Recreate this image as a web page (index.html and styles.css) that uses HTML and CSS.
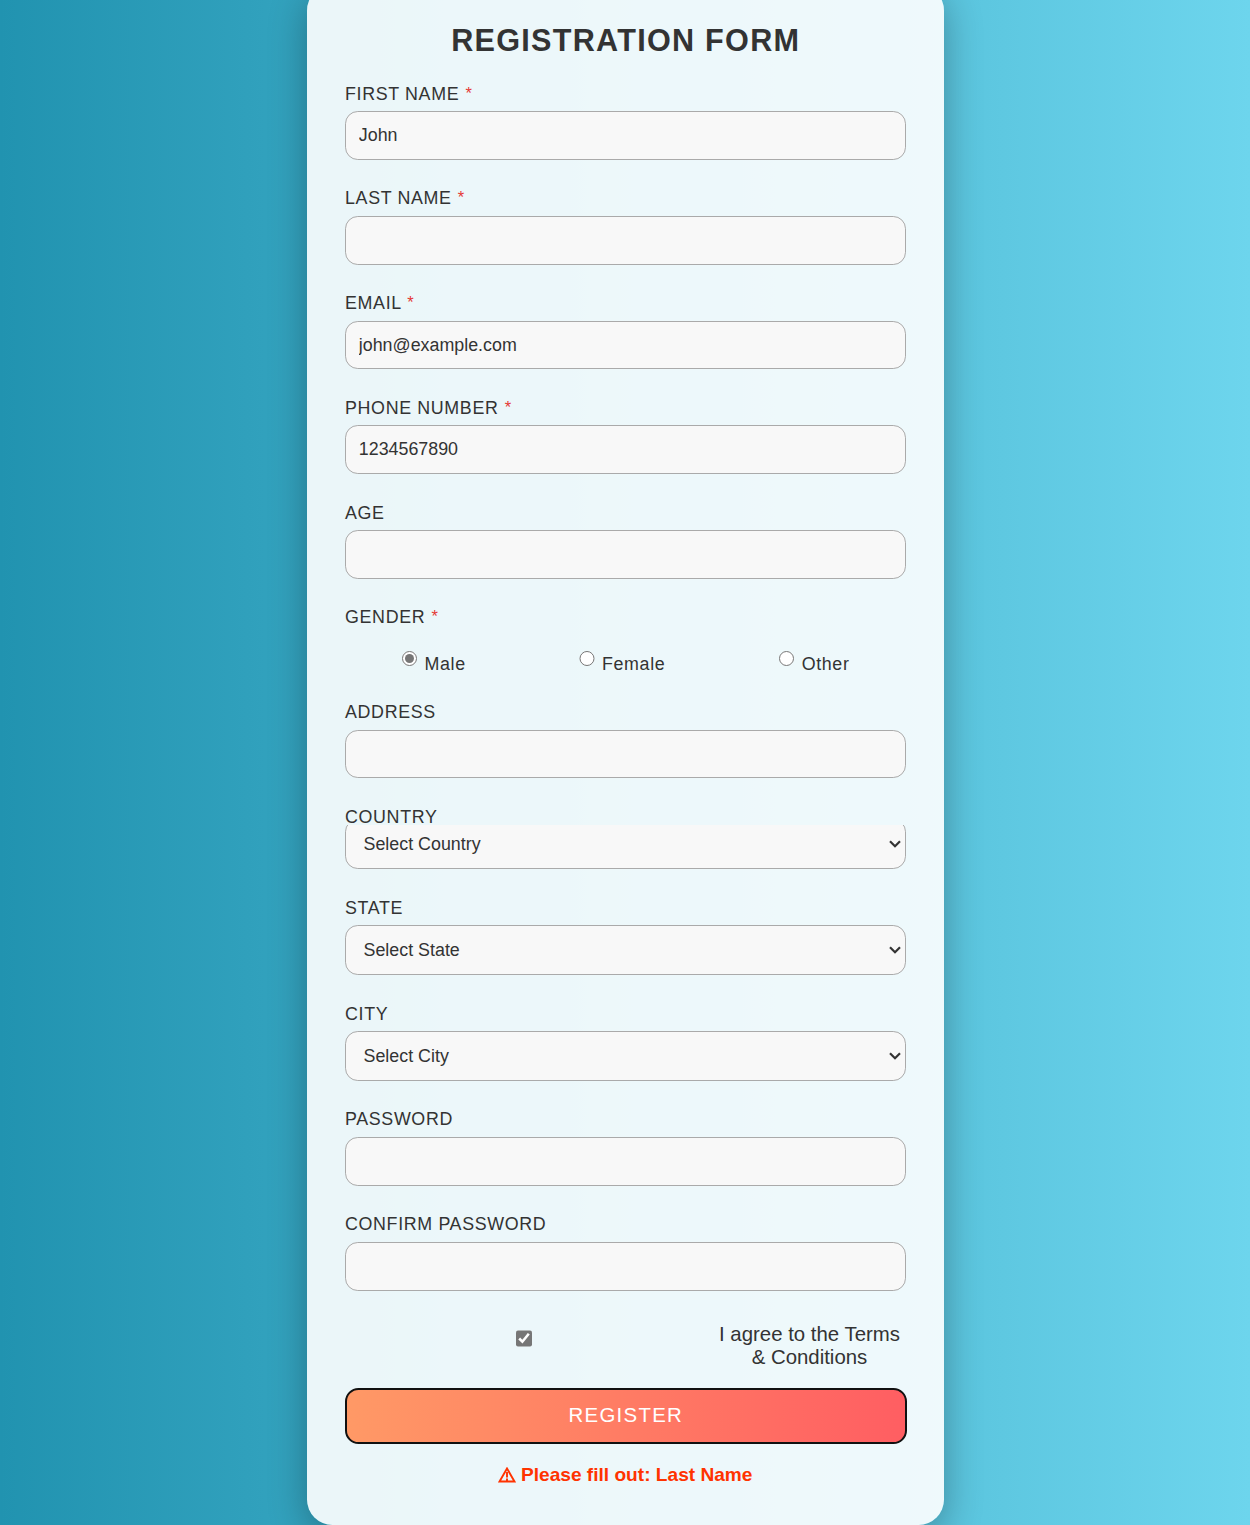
FILE: index.html
```html
<!DOCTYPE html>
<html lang="en">
<head>
<meta charset="utf-8">
<title>Registration Form</title>
<link rel="stylesheet" href="styles.css">
</head>
<body>
<form class="card">
  <h1 class="title">REGISTRATION FORM</h1>
  <div class="field"><label class="label" for="first">FIRST NAME <span class="required">*</span></label><input class="control" id="first" type="text" value="John"></div>
  <div class="field"><label class="label" for="last">LAST NAME <span class="required">*</span></label><input class="control" id="last" type="text"></div>
  <div class="field"><label class="label" for="email">EMAIL <span class="required">*</span></label><input class="control" id="email" type="email" value="john@example.com"></div>
  <div class="field"><label class="label" for="phone">PHONE NUMBER <span class="required">*</span></label><input class="control" id="phone" type="tel" value="1234567890"></div>
  <div class="field"><label class="label" for="age">AGE</label><input class="control" id="age" type="text"></div>
  <div class="field field-gender">
    <span class="label">GENDER <span class="required">*</span></span>
    <div class="radios">
      <label class="radio"><input type="radio" name="gender" checked>Male</label>
      <label class="radio"><input type="radio" name="gender">Female</label>
      <label class="radio"><input type="radio" name="gender">Other</label>
    </div>
  </div>
  <div class="field"><label class="label" for="address">ADDRESS</label><input class="control" id="address" type="text"></div>
  <div class="field field-country">
    <label class="label" for="country">COUNTRY</label>
    <div class="select-box">
      <select class="control" id="country"><option>Select Country</option></select>
      <svg class="chevron" viewBox="0 0 12 8"><path d="M1 1.2 6 6.2 11 1.2"/></svg>
    </div>
  </div>
  <div class="field field-select">
    <label class="label" for="state">STATE</label>
    <div class="select-box">
      <select class="control" id="state"><option>Select State</option></select>
      <svg class="chevron" viewBox="0 0 12 8"><path d="M1 1.2 6 6.2 11 1.2"/></svg>
    </div>
  </div>
  <div class="field field-select">
    <label class="label" for="city">CITY</label>
    <div class="select-box">
      <select class="control" id="city"><option>Select City</option></select>
      <svg class="chevron" viewBox="0 0 12 8"><path d="M1 1.2 6 6.2 11 1.2"/></svg>
    </div>
  </div>
  <div class="field"><label class="label" for="password">PASSWORD</label><input class="control" id="password" type="password"></div>
  <div class="field"><label class="label" for="confirm">CONFIRM PASSWORD</label><input class="control" id="confirm" type="password"></div>
  <div class="terms">
    <input class="check" id="terms" type="checkbox" checked>
    <label for="terms">I agree to the Terms<br>&amp; Conditions</label>
  </div>
  <button class="submit" type="button">REGISTER</button>
  <p class="message"><svg class="warning" viewBox="0 0 18 16"><path d="M9 1.5 16.5 14.5H1.5Z"/><path d="M9 5V10.6M9 11.6V14"/></svg><span>Please fill out: Last Name</span></p>
</form>
</body>
</html>
```
FILE: styles.css
```css
* { box-sizing: border-box; }

body {
  margin: 0;
  height: 1525px;
  overflow: hidden;
  font-family: Arial, "Liberation Sans", sans-serif;
  color: #333;
  background: linear-gradient(to right, #2193b0, #6dd5ed);
}

.card {
  width: 637.5px;
  height: 1540px;
  margin: -15px 0 0 306.8px;
  padding: 35px 37.9px 0 38.25px;
  border-radius: 25.5px;
  background: rgba(255, 255, 255, 0.9);
  box-shadow: 0 10px 38px rgba(0, 0, 0, 0.3);
}

.title {
  margin: 0 0 22.6px;
  height: 40px;
  line-height: 40px;
  font-size: 30.6px;
  letter-spacing: 1.275px;
  text-align: center;
}

.field { height: 104.78px; }
.field-gender { height: 94.5px; }
.field-country { height: 91px; }
.field-select { height: 105.9px; }

.label {
  display: block;
  height: 28.6px;
  line-height: 22px;
  font-size: 17.85px;
  letter-spacing: 0.64px;
}

.required {
  margin-left: 0.6px;
  font-size: 16.5px;
  line-height: 1;
  color: #e53935;
  vertical-align: 1px;
}

.control {
  display: block;
  width: 100%;
  height: 48.7px;
  margin: 0;
  padding: 0 12.75px;
  border: 1.275px solid #aaa;
  border-radius: 12.75px;
  font: 17.85px Arial, "Liberation Sans", sans-serif;
  color: #333;
  background: #f8f8f8;
  appearance: none;
}

.radios {
  display: flex;
  justify-content: space-around;
  padding-top: 9.5px;
}

.radio {
  display: flex;
  font-size: 17.85px;
  letter-spacing: 0.64px;
  line-height: 38px;
}

.radio input {
  width: 15.5px;
  height: 15.5px;
  margin: 6px 7.3px 0 -0.3px;
  accent-color: #767676;
}

.select-box {
  display: grid;
  align-items: center;
}

.select-box > * { grid-area: 1 / 1; }
.select-box .control { height: 49.8px; padding-left: 17.5px; }

/* The country list is shorter than its control, so its top edge is cut. */
.field-country .label { height: 19.2px; }
.field-country .select-box {
  height: 44.2px;
  overflow: hidden;
  align-content: end;
}

.chevron {
  width: 12px;
  height: 8px;
  margin-right: 5px;
  justify-self: end;
  fill: none;
  stroke: #333;
  stroke-width: 2.2;
}

.terms {
  display: grid;
  grid-template-columns: 357.5px 1fr;
  height: 70.4px;
  padding-top: 4.8px;
  font-size: 20.4px;
  line-height: 23px;
  text-align: center;
}

.terms label { padding-left: 10px; }

.check {
  width: 16.6px;
  height: 16.6px;
  margin: 7.5px 0 0;
  justify-self: center;
  accent-color: #767676;
}

.submit {
  display: block;
  width: 562.5px;
  height: 55.5px;
  margin: 0 0 0 -0.5px;
  padding: 0 0 2px;
  border: 2px solid #111;
  border-radius: 13.5px;
  font: 20.4px Arial, "Liberation Sans", sans-serif;
  letter-spacing: 1.275px;
  color: #fff;
  background: linear-gradient(to right, #ff9966, #ff5e62);
}

.message {
  display: flex;
  justify-content: center;
  align-items: center;
  gap: 5px;
  margin: 18.7px 0 0;
  font-size: 19.125px;
  font-weight: bold;
  line-height: 24px;
  color: #ff3300;
}

.warning {
  width: 18px;
  height: 16px;
  margin-left: -1px;
  fill: none;
  stroke: #ff3300;
  stroke-width: 1.9;
}
```
